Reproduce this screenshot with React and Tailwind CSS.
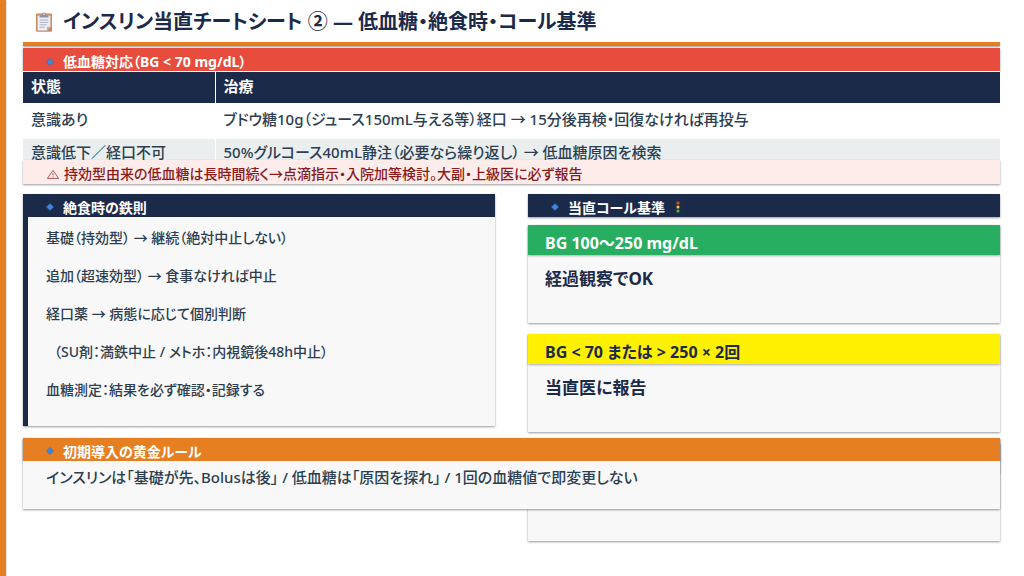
import React from "react";

const treatments = [
  {
    state: "意識あり",
    treatment:
      "ブドウ糖10g（ジュース150mL与える等）経口 → 15分後再検・回復なければ再投与",
  },
  {
    state: "意識低下／経口不可",
    treatment:
      "50%グルコース40mL静注（必要なら繰り返し） → 低血糖原因を検索",
  },
];

const fastingRules = [
  "基礎（持効型） → 継続（絶対中止しない）",
  "追加（超速効型） → 食事なければ中止",
  "経口薬 → 病態に応じて個別判断",
  "（SU剤：満鉄中止 / メトホ：内視鏡後48h中止）",
  "血糖測定：結果を必ず確認・記録する",
];

const ClipboardIcon = () => (
  <svg className="h-5 w-[18px] shrink-0" viewBox="0 0 18 20" aria-hidden="true">
    <rect x="1" y="1.5" width="16" height="18.3" rx="1" fill="#c98b62" />
    <path d="M2.6 3.4h12.8v11.4l-3.6 3.6H2.6z" fill="#eef0f6" />
    <path d="M15.4 14.8h-3.6v3.6z" fill="#aeb4c4" />
    <path
      d="M4.6 8h8.8M4.6 10.4h8.8M4.6 12.8h7M4.6 15.2h5"
      stroke="#a9afbf"
      strokeWidth="1"
    />
    <path d="M4.5 5.4V3.2h2.4C6.9 1.4 7.6.4 9 .4s2.1 1 2.1 2.8h2.4v2.2z" fill="#8b93a5" />
    <circle cx="9" cy="2.2" r=".8" fill="#eef0f6" />
  </svg>
);

const Diamond = () => (
  <svg className="size-2 shrink-0" viewBox="0 0 8 8" aria-hidden="true">
    <path d="M4 .4 7.6 4 4 7.6.4 4z" fill="#3f87dd" stroke="#2d68b5" strokeWidth=".5" />
  </svg>
);

const TrafficLight = () => (
  <svg className="h-3 w-2 shrink-0" viewBox="0 0 8 12" aria-hidden="true">
    <rect x="1.5" y="0" width="5" height="12" rx="1" fill="#2b2f3d" />
    <circle cx="4" cy="2" r="1.5" fill="#e8493f" />
    <circle cx="4" cy="6" r="1.5" fill="#f5c542" />
    <circle cx="4" cy="10" r="1.5" fill="#2fb866" />
  </svg>
);

const WarningIcon = () => (
  <svg
    className="h-3 w-[14px] shrink-0"
    viewBox="0 0 14 12"
    fill="none"
    stroke="#8b1a1a"
    strokeWidth=".7"
    aria-hidden="true"
  >
    <path d="M7 2.4 12.6 10.4H1.4z" strokeLinejoin="round" />
    <path d="M7 5v2.6M7 8.4v1" />
  </svg>
);

const SectionTitle = ({ color, children }) => (
  <h2
    className={`flex items-center gap-[9px] pl-[23px] pt-1 text-sm leading-[19px] font-bold text-white shadow-[0_1px_2px_rgba(0,0,0,0.4)] ${color}`}
  >
    <Diamond />
    {children}
  </h2>
);

// coloured header bar with a light body below
const CallCard = ({ title, text, headClass }) => (
  <div className="bg-[#f8f8f8] shadow-[0_1px_2px_rgba(0,0,0,0.4)]">
    <h3
      className={`h-[30px] px-[17px] pt-[6px] text-base leading-6 font-bold shadow-[0_1px_2px_rgba(0,0,0,0.3)] ${headClass}`}
    >
      {title}
    </h3>
    <p className="h-[68px] px-[17px] pt-3 text-[17px] leading-6 font-bold text-[#1c2a4a]">
      {text}
    </p>
  </div>
);

const App = () => {
  return (
    <div
      lang="ja"
      className="flex min-h-screen bg-white font-['Noto_Sans','Noto_Sans_CJK_JP',sans-serif] font-medium text-[#2c3e50] [font-feature-settings:'palt']"
    >
      {/* accent strip */}
      <div className="w-[6px] shrink-0 bg-[#e67e22] shadow-[0_1px_2px_rgba(0,0,0,0.4)]" />

      <main className="min-w-0 flex-1 pr-6 pl-[17px]">
        <header className="flex h-[42px] items-center gap-[10px] pt-[2px] pl-3">
          <ClipboardIcon />
          <h1 className="text-xl leading-6 font-bold text-[#1c2a4a]">
            インスリン当直チートシート ② — 低血糖・絶食時・コール基準
          </h1>
        </header>
        <div className="h-1 bg-[#e67e22] shadow-[0_1px_2px_rgba(0,0,0,0.4)]" />

        {/* hypoglycemia */}
        <section className="mt-[2px]">
          <SectionTitle color="bg-[#e74c3c]">低血糖対応（BG &lt; 70 mg/dL）</SectionTitle>
          <table className="w-full table-fixed border-collapse text-left text-[15px] leading-5">
            <thead>
              <tr className="h-8 border-y border-white bg-[#1c2a4a] text-white">
                <th className="w-48 border-r border-white px-2 pb-1 font-bold">状態</th>
                <th className="px-2 pb-1 font-bold">治療</th>
              </tr>
            </thead>
            <tbody>
              {treatments.map((item) => (
                <tr key={item.state} className="h-[35px] even:h-[30px] even:bg-[#eaeeef]">
                  <td className="border-r border-white px-2 pb-1">{item.state}</td>
                  <td className="px-2 pb-1">{item.treatment}</td>
                </tr>
              ))}
            </tbody>
          </table>
          <p className="relative -mt-[9px] flex items-center gap-1 bg-[#fdecea] pt-1 pl-[23px] text-sm leading-5 text-[#8b1a1a] shadow-[0_1px_2px_rgba(0,0,0,0.4)]">
            <WarningIcon />
            持効型由来の低血糖は長時間続く→点滴指示・入院加等検討。大副・上級医に必ず報告
          </p>
        </section>

        <div className="mt-[10px] grid grid-cols-2 items-start gap-[33px]">
          {/* fasting rules */}
          <section>
            <SectionTitle color="bg-[#1c2a4a]">絶食時の鉄則</SectionTitle>
            <ul className="flex h-[209px] flex-col gap-[18px] border-l-[5px] border-[#1c2a4a] bg-[#f8f8f8] pt-[11px] pl-[18px] text-sm leading-5 shadow-[0_1px_2px_rgba(0,0,0,0.4)]">
              {fastingRules.map((rule) => (
                <li key={rule} className="nth-4:pl-2">
                  {rule}
                </li>
              ))}
            </ul>
          </section>

          {/* call criteria */}
          <section>
            <SectionTitle color="bg-[#1c2a4a]">
              当直コール基準
              <TrafficLight />
            </SectionTitle>
            <div className="mt-2 flex flex-col gap-[11px]">
              <CallCard
                title="BG 100〜250 mg/dL"
                text="経過観察でOK"
                headClass="bg-[#27ae60] text-white"
              />
              <CallCard
                title="BG < 70 または > 250 × 2回"
                text="当直医に報告"
                headClass="bg-[#fff000] text-[#1c2a4a]"
              />
              <CallCard headClass="bg-[#e74c3c] text-white" />
            </div>
          </section>
        </div>

        {/* golden rule, lies over the last call card */}
        <section className="relative z-10 -mt-[103px] shadow-[0_1px_2px_rgba(0,0,0,0.4)]">
          <SectionTitle color="bg-[#e67e22]">初期導入の黄金ルール</SectionTitle>
          <p className="relative h-12 bg-[#f8f8f8] px-[23px] pt-[6px] text-[15px] leading-5">
            インスリンは「基礎が先、Bolusは後」 / 低血糖は「原因を探れ」 / 1回の血糖値で即変更しない
          </p>
        </section>
      </main>
    </div>
  );
};

export default App;
